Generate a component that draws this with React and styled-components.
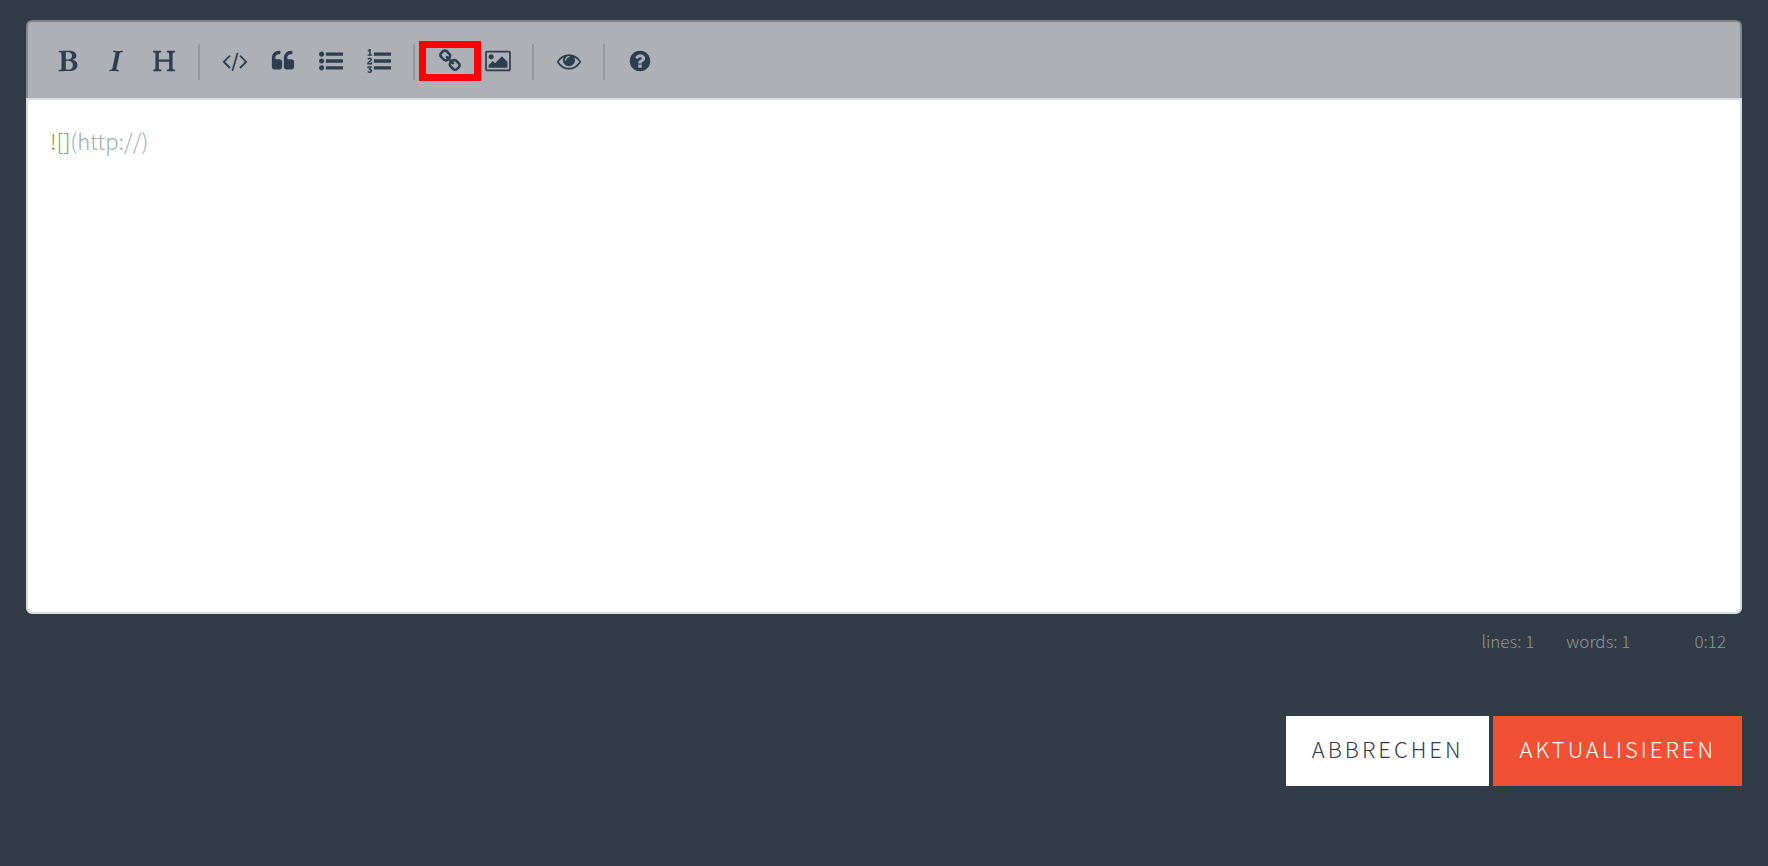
import React, { useState } from "react";
import styled, { createGlobalStyle, css } from "styled-components";

const GlobalStyle = createGlobalStyle`
  *, *::before, *::after { box-sizing: border-box; }
  body {
    margin: 0;
    background: #323c46;
    font-family: "Noto Sans CJK SC", "Noto Sans", sans-serif;
    font-weight: 200;
  }
`;

const Page = styled.main`
  padding: 20px 26px 80px;
`;

const Toolbar = styled.div`
  display: flex;
  align-items: flex-start;
  padding: 22px 16px 18px;
  border: 2px solid #82868b;
  border-bottom: 0;
  border-radius: 6px 6px 0 0;
  background: #adb1b5;
`;

const ToolButton = styled.button`
  display: flex;
  align-items: center;
  justify-content: center;
  width: 48px;
  height: 26px;
  margin: 4px 0 0;
  padding: 0;
  border: 0;
  background: transparent;
  color: #2c3e50;
  cursor: pointer;
  ${(p) => p.$marked && css`outline: 7px solid #ff0000;`}
`;

const Separator = styled.span`
  width: 2px;
  height: 36px;
  margin: 0 11px 0 10px;
  background: #94989c;
`;

const Glyph = styled.svg`
  width: 24px;
  height: 24px;
  overflow: visible;
  fill: currentColor;
`;

const Editor = styled.div`
  display: grid;
  min-height: 516px;
  padding: 20px 22px;
  border: 2px solid #dadddd;
  border-radius: 0 0 6px 6px;
  background: #ffffff;
`;

const editorText = css`
  grid-area: 1 / 1;
  margin: 0;
  padding: 0;
  border: 0;
  font: inherit;
  font-size: 22px;
  line-height: 40px;
  white-space: pre-wrap;
`;

const Highlight = styled.pre`
  ${editorText}
  color: #8a9898;
  opacity: 0.8;
`;

const Source = styled.textarea`
  ${editorText}
  background: transparent;
  color: transparent;
  caret-color: #2c3e50;
  outline: 0;
  resize: none;
`;

const ImageTag = styled.span`
  color: #2f8f26;
`;

const StatusBar = styled.div`
  display: flex;
  justify-content: flex-end;
  padding: 15px 16px 0;
  color: #959694;
  font-size: 17px;
  line-height: 24px;
`;

const Status = styled.span`
  margin-left: ${(p) => (p.$wide ? 64 : 32)}px;
`;

const Actions = styled.div`
  display: flex;
  justify-content: flex-end;
  gap: 4px;
  margin-top: 63px;
`;

const ActionButton = styled.button`
  height: 70px;
  padding: 0 26px 6px;
  border: 0;
  background: ${(p) => (p.$primary ? "#f05033" : "#ffffff")};
  color: ${(p) => (p.$primary ? "#ffffff" : "#323c46")};
  font: inherit;
  font-size: 22px;
  line-height: 34px;
  letter-spacing: 3px;
  text-transform: uppercase;
  cursor: pointer;
`;

const icons = {
  bold: "M747 1521q74 32 140 32 376 0 376-335 0-114-41-180-27-44-61.5-74t-67.5-46.5-80.5-25-84-10.5-94.5-2q-73 0-101 10 0 53-.5 159t-.5 158q0 8-1 67.5t-.5 96.5 4.5 83.5 12 66.5zm-14-746q42 7 109 7 82 0 143-13t110-44.5 74.5-89.5 25.5-142q0-70-29-122.5t-79-82-108-43.5-124-14q-50 0-130 13 0 50 4 151t4 152q0 27-.5 80t-.5 79q0 46 1 69zm-541 889l2-94q15-4 85-16t106-27q7-12 12.5-27t8.5-33.5 5.5-32.5 3-37.5.5-34v-65.5q0-982-22-1025-4-8-22-14.5t-44.5-11-49.5-7-48.5-4.5-30.5-3l-4-83q98-2 340-11.5t373-9.5q23 0 68.5.5t67.5.5q70 0 136.5 13t128.5 42 108 71 74 104.5 28 137.5q0 52-16.5 95.5t-39 72-64.5 57.5-73 45-84 40q154 35 256.5 134t102.5 248q0 100-35 179.5t-93.5 130.5-138 85.5-163.5 48.5-176 14q-44 0-132-3t-132-3q-106 0-307 11t-231 12z",
  italic: "M384 1662l17-85q6-2 81.5-21.5t111.5-37.5q28-35 41-101 1-7 62-289t114-543.5 52-296.5v-25q-24-13-54.5-18.5t-69.5-8-58-5.5l19-103q33 2 120 6.5t149.5 7 120.5 2.5q48 0 98.5-2.5t121-7 98.5-6.5q-5 39-19 89-30 10-101.5 28.5t-108.5 33.5q-8 19-14 42.5t-9 40-7.5 45.5-6.5 42q-27 148-87.5 419.5t-77.5 355.5q-2 9-13 58t-20 90-16 83.5-6 57.5l1 18q17 4 185 31-3 44-16 99-11 0-32.5 1.5t-32.5 1.5q-29 0-87-10t-86-10q-138-2-206-2-51 0-143 9t-121 11z",
  heading: "M1682 1664q-44 0-132.5-3.5t-133.5-3.5q-44 0-132 3.5t-132 3.5q-24 0-37-20.5t-13-45.5q0-31 17-46t39-17 51-7 45-15q33-21 33-140l-1-391q0-21-1-31-13-4-50-4h-675q-38 0-51 4-1 10-1 31l-1 371q0 142 37 164 16 10 48 13t57 3.5 45 15 20 45.5q0 26-12.5 48t-36.5 22q-47 0-139.5-3.5t-138.5-3.5q-43 0-128 3.5t-127 3.5q-23 0-35.5-21t-12.5-45q0-30 15.5-45t36-17.5 47.5-7.5 42-15q33-23 33-143l-1-57v-813q0-3 .5-26t0-36.5-1.5-38.5-3.5-42-6.5-36.5-11-31.5-16-18q-15-10-45-12t-53-2-41-14-18-45q0-26 12-48t36-22q46 0 138.5 3.5t138.5 3.5q42 0 126.5-3.5t126.5-3.5q25 0 37.5 22t12.5 48q0 30-17 43.5t-38.5 14.5-49.5 4-43 13q-35 21-35 160l1 320q0 21 1 32 13 3 39 3h699q25 0 38-3 1-11 1-32l1-320q0-139-35-160-18-11-58.5-13t-66-13-25.5-49q0-26 12.5-48t37.5-22q44 0 132 3.5t132 3.5q43 0 129-3.5t129-3.5q25 0 37.5 22t12.5 48q0 30-17.5 44t-40 14.5-51.5 3-44 12.5q-35 23-35 161l1 943q0 119 34 140 16 10 46 13.5t53.5 4.5 41.5 15.5 18 44.5q0 26-12 48t-36 22z",
  code: "M553 1399l-50 50q-10 10-23 10t-23-10l-466-466q-10-10-10-23t10-23l466-466q10-10 23-10t23 10l50 50q10 10 10 23t-10 23l-393 393 393 393q10 10 10 23t-10 23zm591-1067l-373 1291q-4 13-15.5 19.5t-23.5 2.5l-62-17q-13-4-19.5-15.5t-2.5-24.5l373-1291q4-13 15.5-19.5t23.5-2.5l62 17q13 4 19.5 15.5t2.5 24.5zm657 651l-466 466q-10 10-23 10t-23-10l-50-50q-10-10-10-23t10-23l393-393-393-393q-10-10-10-23t10-23l50-50q10-10 23-10t23 10l466 466q10 10 10 23t-10 23z",
  quote: "M832 960v384q0 80-56 136t-136 56h-384q-80 0-136-56t-56-136v-704q0-104 40.5-198.5t109.5-163.5 163.5-109.5 198.5-40.5h64q26 0 45 19t19 45v128q0 26-19 45t-45 19h-64q-106 0-181 75t-75 181v32q0 40 28 68t68 28h224q80 0 136 56t56 136zm896 0v384q0 80-56 136t-136 56h-384q-80 0-136-56t-56-136v-704q0-104 40.5-198.5t109.5-163.5 163.5-109.5 198.5-40.5h64q26 0 45 19t19 45v128q0 26-19 45t-45 19h-64q-106 0-181 75t-75 181v32q0 40 28 68t68 28h224q80 0 136 56t56 136z",
  bullets: "M384 1408q0 80-56 136t-136 56-136-56-56-136 56-136 136-56 136 56 56 136zm0-512q0 80-56 136t-136 56-136-56-56-136 56-136 136-56 136 56 56 136zm1408 416v192q0 13-9.5 22.5t-22.5 9.5h-1216q-13 0-22.5-9.5t-9.5-22.5v-192q0-13 9.5-22.5t22.5-9.5h1216q13 0 22.5 9.5t9.5 22.5zm-1408-928q0 80-56 136t-136 56-136-56-56-136 56-136 136-56 136 56 56 136zm1408 416v192q0 13-9.5 22.5t-22.5 9.5h-1216q-13 0-22.5-9.5t-9.5-22.5v-192q0-13 9.5-22.5t22.5-9.5h1216q13 0 22.5 9.5t9.5 22.5zm0-512v192q0 13-9.5 22.5t-22.5 9.5h-1216q-13 0-22.5-9.5t-9.5-22.5v-192q0-13 9.5-22.5t22.5-9.5h1216q13 0 22.5 9.5t9.5 22.5z",
  numbers: "M381 1620q0 80-54.5 126t-135.5 46q-106 0-172-66l57-88q49 45 106 45 29 0 50.5-14.5t21.5-42.5q0-64-105-56l-26-56q8-10 32.5-43.5t42.5-54 37-38.5v-1q-16 0-48.5 1t-48.5 1v53h-106v-152h333v88l-95 115q51 12 81 49t30 88zm2-627v159h-362q-6-36-6-54 0-51 23.5-93t56.5-68 66-47.5 56.5-43.5 23.5-45q0-25-14.5-38.5t-39.5-13.5q-46 0-81 58l-85-59q24-51 71.5-79.5t105.5-28.5q73 0 123 41.5t50 112.5q0 50-34 91.5t-75 64.5-75.5 50.5-35.5 52.5h127v-60h105zm1409 319v192q0 13-9.5 22.5t-22.5 9.5h-1216q-13 0-22.5-9.5t-9.5-22.5v-192q0-14 9-23t23-9h1216q13 0 22.5 9.5t9.5 22.5zm-1408-899v99h-335v-99h107q0-41 .5-121.5t.5-121.5v-12h-2q-8 17-50 54l-71-76 136-127h106v404h108zm1408 387v192q0 13-9.5 22.5t-22.5 9.5h-1216q-13 0-22.5-9.5t-9.5-22.5v-192q0-14 9-23t23-9h1216q13 0 22.5 9.5t9.5 22.5zm0-512v192q0 13-9.5 22.5t-22.5 9.5h-1216q-13 0-22.5-9.5t-9.5-22.5v-192q0-13 9.5-22.5t22.5-9.5h1216q13 0 22.5 9.5t9.5 22.5z",
  link: "M1520 1216q0-40-28-68l-208-208q-28-28-68-28-42 0-72 32 3 3 19 18.5t21.5 21.5 15 19 13 25.5 3.5 27.5q0 40-28 68t-68 28q-15 0-27.5-3.5t-25.5-13-19-15-21.5-21.5-18.5-19q-33 31-33 73 0 40 28 68l206 207q27 27 68 27 40 0 68-26l147-146q28-28 28-67zm-703-705q0-40-28-68l-206-207q-28-28-68-28-39 0-68 27l-147 146q-28 28-28 67 0 40 28 68l208 208q27 27 68 27 42 0 72-31-3-3-19-18.5t-21.5-21.5-15-19-13-25.5-3.5-27.5q0-40 28-68t68-28q15 0 27.5 3.5t25.5 13 19 15 21.5 21.5 18.5 19q33-31 33-73zm895 705q0 120-85 203l-147 146q-83 83-203 83-121 0-204-85l-206-207q-83-83-83-203 0-123 88-209l-88-88q-86 88-208 88-120 0-204-84l-208-208q-84-84-84-204t85-203l147-146q83-83 203-83 121 0 204 85l206 207q83 83 83 203 0 123-88 209l88 88q86-88 208-88 120 0 204 84l208 208q84 84 84 204z",
  image: "M576 576q0 80-56 136t-136 56-136-56-56-136 56-136 136-56 136 56 56 136zm1024 384v448h-1408v-192l320-320 160 160 512-512zm96-704h-1600q-13 0-22.5 9.5t-9.5 22.5v1216q0 13 9.5 22.5t22.5 9.5h1600q13 0 22.5-9.5t9.5-22.5v-1216q0-13-9.5-22.5t-22.5-9.5zm160 32v1216q0 66-47 113t-113 47h-1600q-66 0-113-47t-47-113v-1216q0-66 47-113t113-47h1600q66 0 113 47t47 113z",
  eye: "M1664 960q-152-236-381-353 61 104 61 225 0 185-131.5 316.5t-316.5 131.5-316.5-131.5-131.5-316.5q0-121 61-225-229 117-381 353 133 205 333.5 326.5t434.5 121.5 434.5-121.5 333.5-326.5zm-720-384q0-20-14-34t-34-14q-125 0-214.5 89.5t-89.5 214.5q0 20 14 34t34 14 34-14 14-34q0-86 61-147t147-61q20 0 34-14t14-34zm848 384q0 34-20 69-140 230-376.5 368.5t-499.5 138.5-499.5-139-376.5-368q-20-35-20-69t20-69q140-229 376.5-368t499.5-139 499.5 139 376.5 368q20 35 20 69z",
  help: "M1024 1376v-192q0-14-9-23t-23-9h-192q-14 0-23 9t-9 23v192q0 14 9 23t23 9h192q14 0 23-9t9-23zm256-672q0-88-55.5-163t-138.5-116-170-41q-243 0-371 213-15 24 8 42l132 100q7 6 19 6 16 0 25-12 53-68 86-92 34-24 86-24 48 0 85.5 26t37.5 59q0 38-20 61t-68 45q-63 28-115.5 86.5t-52.5 125.5v36q0 14 9 23t23 9h192q14 0 23-9t9-23q0-19 21.5-49.5t54.5-49.5q32-18 49-28.5t46-35 44.5-48 28-60.5 12.5-81zm384 192q0 209-103 385.5t-279.5 279.5-385.5 103-385.5-103-279.5-279.5-103-385.5 103-385.5 279.5-279.5 385.5-103 385.5 103 279.5 279.5 103 385.5z",
};

const groups = [
  [["bold", "Fett"], ["italic", "Kursiv"], ["heading", "Überschrift"]],
  [["code", "Code"], ["quote", "Zitat"], ["bullets", "Liste"], ["numbers", "Nummerierte Liste"]],
  [["link", "Link"], ["image", "Bild"]],
  [["eye", "Vorschau"]],
  [["help", "Hilfe"]],
];

function Tool({ name, label }) {
  return (
    <ToolButton type="button" aria-label={label} $marked={name === "link"}>
      <Glyph viewBox="0 0 1792 1792" aria-hidden="true">
        <path d={icons[name]} />
      </Glyph>
    </ToolButton>
  );
}

function highlight(source) {
  return source
    .split(/(!\[[^\]]*\])/)
    .map((part, i) => (i % 2 ? <ImageTag key={i}>{part}</ImageTag> : part));
}

export default function App() {
  const [source, setSource] = useState("![](http://)");
  const lines = source.split("\n").length;
  const words = source.split(/\s+/).filter(Boolean).length;

  return (
    <>
      <GlobalStyle />
      <Page>
        <Toolbar role="toolbar" aria-label="Formatierung">
          {groups.map((group, i) => (
            <React.Fragment key={i}>
              {i > 0 && <Separator />}
              {group.map(([name, label]) => (
                <Tool key={name} name={name} label={label} />
              ))}
            </React.Fragment>
          ))}
        </Toolbar>
        <Editor>
          <Highlight aria-hidden="true">{highlight(source)}</Highlight>
          <Source
            aria-label="Text"
            spellCheck={false}
            value={source}
            onChange={(e) => setSource(e.target.value)}
          />
        </Editor>
        <StatusBar>
          <Status>lines: {lines}</Status>
          <Status>words: {words}</Status>
          <Status $wide>0:12</Status>
        </StatusBar>
        <Actions>
          <ActionButton type="button">Abbrechen</ActionButton>
          <ActionButton type="button" $primary>Aktualisieren</ActionButton>
        </Actions>
      </Page>
    </>
  );
}
